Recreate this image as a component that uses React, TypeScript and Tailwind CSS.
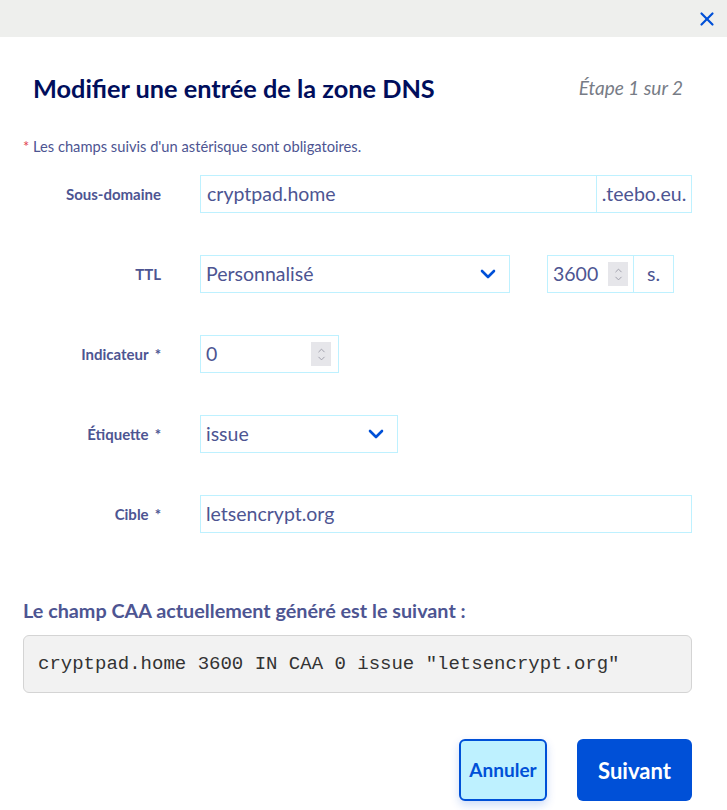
import { X, ChevronDown, ChevronUp } from 'lucide-react';

const font = 'font-["Lato","Noto_Sans",sans-serif]';

function Spinner() {
  return (
    <div className="flex h-[24px] w-[20px] flex-col items-center justify-center bg-[#e6e6ea]">
      <ChevronUp className="-mb-[3px] h-[11px] w-[11px] text-[#9a9aa6]" strokeWidth={2} />
      <ChevronDown className="h-[11px] w-[11px] text-[#9a9aa6]" strokeWidth={2} />
    </div>
  );
}

function Chevron() {
  return <ChevronDown className="h-[24px] w-[24px] text-[#0050d7]" strokeWidth={2.6} />;
}

function Row({ label, required, children }: { label: string; required?: boolean; children: React.ReactNode }) {
  return (
    <div className="flex items-center">
      <div className="w-[161px] text-right text-[15px] font-bold text-[#4d5592]">
        {label}
        {required && <span className="ml-[6px]">*</span>}
      </div>
      <div className="ml-[39px] flex flex-1 items-center">{children}</div>
    </div>
  );
}

export default function App() {
  const box = 'h-[38px] border border-[#bef1ff] bg-white flex items-center text-[19.5px] text-[#4d5592]';

  return (
    <div className={`${font} h-[810px] w-[727px] bg-white`}>
      {/* Top bar */}
      <div className="flex h-[37px] items-center justify-end bg-[#eeefed] pr-[9px]">
        <X className="h-[22px] w-[22px] text-[#0050d7]" strokeWidth={2.4} />
      </div>

      {/* Title */}
      <div className="mt-[35px] flex items-center justify-between pl-[33px] pr-[44px]">
        <h1 className="text-[25.3px] leading-[32px] font-bold text-[#000e5c]">Modifier une entrée de la zone DNS</h1>
        <span className="text-[19px] italic text-[#777c86]">Étape 1 sur 2</span>
      </div>

      <p className="mt-[33px] pl-[23px] text-[14.7px] leading-[18px] text-[#4d5592]">
        <span className="text-[#e0424e]">*</span> Les champs suivis d'un astérisque sont obligatoires.
      </p>

      {/* Form */}
      <div className="mt-[20px] flex flex-col gap-[42px] pr-[35px]">
        <Row label="Sous-domaine">
          <div className={`${box} flex-1 px-[6px]`}>cryptpad.home</div>
          <div className={`${box} -ml-px w-[96px] justify-center px-[4px]`}>.teebo.eu.</div>
        </Row>

        <Row label="TTL">
          <div className={`${box} w-[310px] justify-between pl-[5px] pr-[9px]`}>
            <span>Personnalisé</span>
            <Chevron />
          </div>
          <div className={`${box} ml-[37px] w-[87px] justify-between pl-[5px] pr-[5px]`}>
            <span>3600</span>
            <Spinner />
          </div>
          <div className={`${box} -ml-px w-[41px] justify-center`}>s.</div>
        </Row>

        <Row label="Indicateur" required>
          <div className={`${box} w-[139px] justify-between pl-[5px] pr-[7px]`}>
            <span>0</span>
            <Spinner />
          </div>
        </Row>

        <Row label="Étiquette" required>
          <div className={`${box} w-[198px] justify-between pl-[5px] pr-[9px]`}>
            <span>issue</span>
            <Chevron />
          </div>
        </Row>

        <Row label="Cible" required>
          <div className={`${box} flex-1 px-[5px]`}>letsencrypt.org</div>
        </Row>
      </div>

      {/* Generated record */}
      <h2 className="mt-[65px] pl-[23px] text-[19.8px] leading-[24px] font-bold text-[#4d5592]">
        Le champ CAA actuellement généré est le suivant :
      </h2>
      <div className="mx-[35px] ml-[23px] mt-[13px] flex h-[58px] items-center rounded-[6px] border border-[#d4d4d4] bg-[#f2f2f2] px-[14px] font-['Liberation_Mono',monospace] text-[19px] text-[#333]">
        cryptpad.home 3600 IN CAA 0 issue "letsencrypt.org"
      </div>

      {/* Actions */}
      <div className="mt-[46px] flex justify-end gap-[30px] pr-[35px]">
        <button className="h-[62px] w-[88px] rounded-[6px] border-2 border-[#0050d7] bg-[#bef1ff] text-[19px] font-bold text-[#0050d7] shadow-[0_4px_10px_rgba(0,80,215,0.2)]">
          Annuler
        </button>
        <button className="h-[62px] w-[115px] rounded-[6px] bg-[#0050d7] text-[22px] font-bold text-white">
          Suivant
        </button>
      </div>
    </div>
  );
}
